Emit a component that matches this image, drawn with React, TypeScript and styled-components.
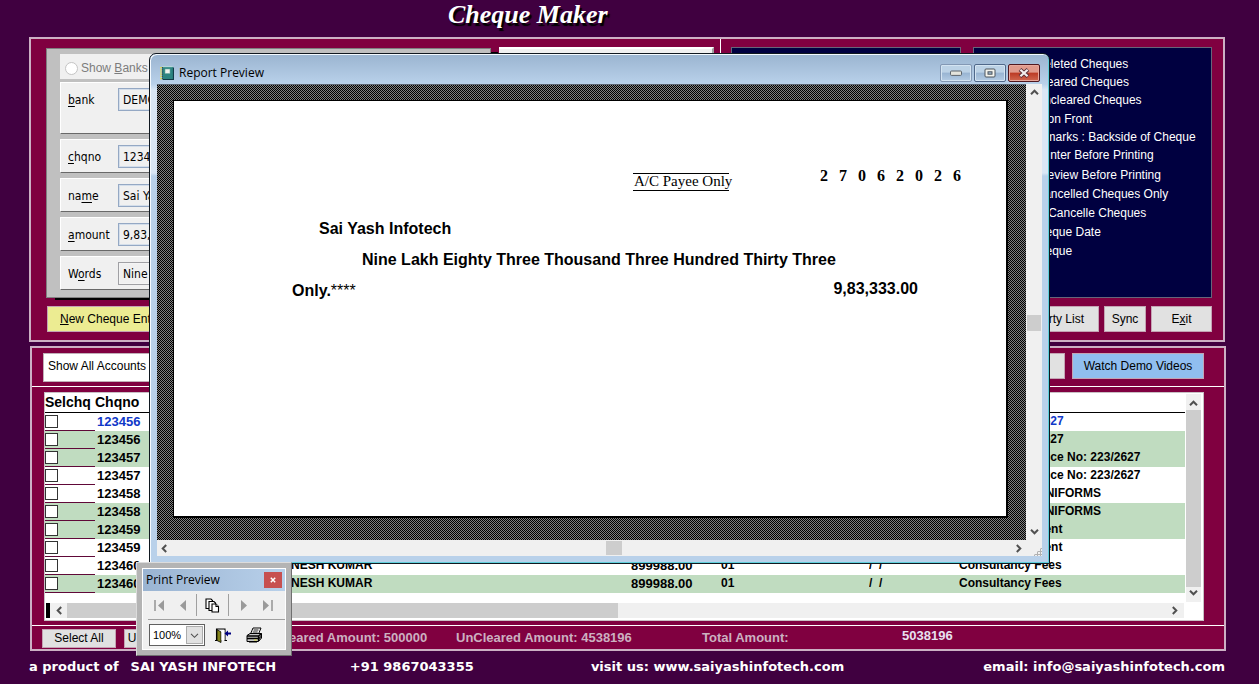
import React from "react";
import styled, { createGlobalStyle, css } from "styled-components";

const GlobalStyle = createGlobalStyle`
  *, *::before, *::after { box-sizing: border-box; }
  body {
    margin: 0;
    background: #400040;
    font-family: "Liberation Sans", Arial, sans-serif;
    font-size: 12px;
    color: #000;
  }
  button, input, select { font: inherit; color: inherit; margin: 0; }
`;

/* ---------- page ---------- */

const Page = styled.div`
  position: relative;
  min-width: 1060px;
  overflow: hidden;
  padding-left: 29px;
  padding-right: 34px;
`;

const AppTitle = styled.h1`
  margin: 0;
  height: 37px;
  padding-left: 419px;
  font: italic bold 26px/30px "Liberation Serif", serif;
  color: #fff;
  text-shadow: 2px 3px 1px #000;
`;

const Panel = styled.section`
  background: #800040;
  border: 2px solid #ccb0c4;
`;

const EntryPanel = styled(Panel)`
  display: flex;
  height: 305px;
  margin-bottom: 4px;
`;

const EntrySide = styled.div`
  flex: 667 1 0;
  padding: 9px 6px 8px 15px;
  display: grid;
  grid-template-columns: 445px 1fr;
  grid-template-rows: 251px 26px;
  gap: 7px 8px;
  align-items: start;
  border-right: 1px solid #fff;
`;

const OptionSide = styled.div`
  flex: 480 1 0;
  padding: 8px 11px 8px 10px;
  display: grid;
  grid-template-columns: 230px 1fr;
  grid-template-rows: 251px 26px;
  gap: 8px 12px;
`;

const FormBox = styled.form`
  height: 250px;
  padding: 5px 13px;
  display: flex;
  flex-direction: column;
  gap: 5px;
  background: #c0c0c0;
  border: 1px solid #808080;
  box-shadow: 8px 3px 0 -1px #000;
`;

const FormRow = styled.div<{ $tall?: boolean }>`
  display: flex;
  align-items: flex-start;
  height: ${(p) => (p.$tall ? 52 : 34)}px;
  padding: 5px 8px 4px 7px;
  background: #f0f0f0;
  border-style: solid;
  border-width: 1px 0 1px 1px;
  border-color: #fff #fff #696969 #fff;
  font-family: "DejaVu Sans Condensed", "DejaVu Sans", sans-serif;
  font-size: 12px;

  label { width: 50px; line-height: 24px; }
  u { text-underline-offset: 2px; }
`;

const BankModeRow = styled.div`
  display: flex;
  align-items: center;
  flex: none;
  gap: 3px;
  height: 25px;
  margin-bottom: -2px;
  padding: 3px 0 0 5px;
  background: #f0f0f0;
  color: #7c7c7c;

  input {
    appearance: none;
    width: 13px;
    height: 13px;
    border: 1px solid #c4c4c4;
    border-radius: 50%;
    background: #fff;
  }
`;

const Field = styled.input<{ $plain?: boolean }>`
  flex: 1;
  min-width: 0;
  height: 23px;
  padding: 0 4px;
  border: 1px solid ${(p) => (p.$plain ? "#a0a0a4" : "#94a8c4")};
  box-shadow: inset 0 0 0 1px ${(p) => (p.$plain ? "#f4f4f4" : "#d4deea")};
  background: #f0f0f0;
`;

const SidePane = styled.div`
  height: 250px;
  margin-top: -1px;
  background: #f0f0f0;
  border-top: 2px solid #fff;
  border-right: 2px solid #a0a0a0;
`;

const NavyPane = styled.div`
  background: #000040;
  border: 1px solid #66667a;
`;

const OptionPane = styled(NavyPane)`
  padding: 7px 10px;
  color: #fff;
`;

const OptionGroup = styled.div<{ $row: number }>`
  margin-bottom: 1px;

  label {
    display: flex;
    align-items: center;
    gap: 5px;
    height: ${(p) => p.$row}px;
    white-space: nowrap;
  }
  input { width: 13px; height: 13px; }
`;

const ButtonRow = styled.div`
  grid-column: 1 / -1;
  display: flex;
  justify-content: flex-end;
  gap: 5px;
`;

const tones = { grey: "#e1e1e1", yellow: "#ecec92", blue: "#90beef" };

const Button = styled.button<{ $tone?: keyof typeof tones; $width: number }>`
  width: ${(p) => p.$width}px;
  height: 26px;
  padding: 0;
  background: ${(p) => tones[p.$tone ?? "grey"]};
  border: 1px solid #c4a4b4;
  white-space: nowrap;
`;

const StartButton = styled(Button)`
  margin-left: 1px;
  padding-left: 12px;
  text-align: left;
`;

/* ---------- cheque list ---------- */

const ListPanel = styled(Panel)`
  margin: 0 -1px 0 1px;
  height: 305px;
  display: flex;
  flex-direction: column;
`;

const ListTools = styled.div`
  display: flex;
  gap: 7px;
  height: 39px;
  padding: 5px 20px 0 11px;
  border-bottom: 1px solid #fff;
`;

const AccountSelect = styled.select`
  appearance: none;
  width: 240px;
  height: 29px;
  margin-right: auto;
  padding: 0 4px 4px;
  background: #fff;
  border: 1px solid #c0b0b8;
`;

const Grid = styled.div`
  flex: none;
  height: 229px;
  margin: 5px 20px 4px 12px;
  border: 1px solid #c8c0c4;
  background: #fff;
  display: grid;
  grid-template-columns: 1fr 18px;
  grid-template-rows: 210px 17px;
  align-items: start;
`;

const ChequeTable = styled.table`
  width: 100%;
  table-layout: fixed;
  border-collapse: separate;
  border-spacing: 0;
  font-weight: bold;

  th {
    height: 20px;
    padding: 0;
    border-bottom: 1px solid #000;
    font-size: 14px;
    line-height: 17px;
    text-align: left;
  }
  td {
    height: 18px;
    padding: 0;
    line-height: 17px;
    vertical-align: top;
    white-space: nowrap;
    overflow: hidden;
  }
  td:first-child { border-bottom: 1px solid #600838; }
  td:nth-child(2) { padding-left: 2px; }
  td:nth-child(2), td:nth-child(4) { font-size: 13px; }
  td:nth-child(6) { white-space: pre; }
`;

const ChequeRow = styled.tr<{ $shaded: boolean; $current: boolean }>`
  background: ${(p) => (p.$shaded ? "#c0dcc0" : "#fff")};
  ${(p) => p.$current && css`color: #1038c8;`}
`;

const Tick = styled.input`
  appearance: none;
  display: block;
  width: 13px;
  height: 13px;
  margin-top: 2px;
  background: #fff;
  border: 1px solid #333;
`;

const VBar = styled.div`
  height: 100%;
  display: flex;
  flex-direction: column;
  align-items: center;
  justify-content: space-between;
  background: #f0f0f0;
`;

const HBar = styled(VBar)`
  flex-direction: row;
`;

const GridVBar = styled(VBar)`
  height: 208px;
  margin: 1px 2px 0 1px;
  padding: 5px 0;
`;

const GridHBar = styled(HBar)`
  height: 15px;
  margin: 0 1px;
  padding-right: 5px;
`;

const Marker = styled.span`
  width: 4px;
  height: 15px;
  margin-right: 5px;
  background: #000;
`;

const Thumb = styled.span<{ $w: number; $h: number }>`
  flex: none;
  width: ${(p) => p.$w}px;
  height: ${(p) => p.$h}px;
  background: #cdcdcd;
`;

const Spacer = styled.span<{ $grow?: number; $size?: number }>`
  flex: ${(p) => (p.$size ? 0 : p.$grow ?? 1)} 0 ${(p) => p.$size ?? 0}px;
`;

const Totals = styled.div`
  flex: 1;
  display: flex;
  align-items: flex-start;
  padding: 3px 10px 0;
  border-top: 1px solid #fff;
  color: #ccb0c0;
  font-size: 13px;
  font-weight: bold;
  line-height: 17px;
  white-space: nowrap;
`;

const SmallButton = styled(Button)`
  height: 19px;
  margin-right: 8px;
  color: #000;
  font-size: 12px;
  font-weight: normal;
`;

const Total = styled.span<{ $width: number; $bright?: boolean }>`
  width: ${(p) => p.$width}px;
  ${(p) => p.$bright && css`color: #e8e0f0; line-height: 14px;`}
`;

const Footer = styled.footer`
  display: grid;
  grid-template-columns: 318fr 239fr 389fr auto;
  height: 33px;
  color: #fff;
  font: bold 13px/31px "DejaVu Sans", Verdana, sans-serif;
  white-space: nowrap;

  a { color: inherit; text-decoration: none; }
`;

const Maker = styled.span`
  display: flex;
  gap: 12px;
`;

/* ---------- report preview window ---------- */

const ReportWindow = styled.section`
  position: absolute;
  left: 149px;
  top: 53px;
  width: 901px;
  height: 511px;
  padding: 0 7px 7px;
  display: flex;
  flex-direction: column;
  border: 1px solid #101820;
  border-radius: 7px 7px 0 0;
  background: linear-gradient(#9ab4d0, #b9d1ea 30px, #dae7f5 36px, #dae7f5 119px, #b9d1ea 122px);
  box-shadow: inset 1px 1px 0 #f4faff, inset -1px -1px 0 #5fd0dc;
`;

const TitleBar = styled.header`
  display: flex;
  align-items: center;
  height: 30px;
  flex: none;
  padding: 7px 2px 0 3px;
  gap: 5px;
  font: 12px/20px "Open Sans", "Noto Sans", sans-serif;

  h2 { flex: 1; margin: 0; font: inherit; }
`;

const CaptionButtons = styled.div`
  display: flex;
  gap: 2px;
`;

const CaptionButton = styled.button<{ $close?: boolean; $faint?: boolean }>`
  width: 32px;
  height: 18px;
  padding: 0;
  display: grid;
  place-items: center;
  border: 1px solid ${(p) => (p.$close ? "#501820" : p.$faint ? "#8398b4" : "#50688a")};
  border-radius: 2px;
  box-shadow: inset 0 0 0 1px ${(p) => (p.$close ? "#e8a89c" : "#d4e4f2")};
  background: ${(p) =>
    p.$close
      ? "linear-gradient(#e09a8c 0 45%, #bc3a24 50%, #d06850)"
      : "linear-gradient(#bcd2e6 0 45%, #98b4d2 50%, #b4cce4)"};
`;

const Client = styled.div`
  flex: 1;
  display: grid;
  grid-template-columns: 1fr 16px;
  grid-template-rows: 1fr 16px;
  background: #f0f0f0;
  min-height: 0;
`;

const Desk = styled.div`
  padding: 15px 18px 22px 16px;
  display: flex;
  border-top: 1px solid #5c6470;
  background: repeating-conic-gradient(#808080 0 25%, #000 0 50%) 0 0 / 2px 2px;
`;

const Cheque = styled.article`
  flex: 1;
  display: flex;
  flex-direction: column;
  padding: 72px 45px 0 118px;
  border: solid #000;
  border-width: 1px 2px 2px 1px;
  background: #fff;
  font-size: 16px;
  font-weight: bold;
  white-space: nowrap;
`;

const ChequeTop = styled.div`
  display: flex;
  justify-content: flex-end;
  align-items: flex-start;
  gap: 91px;
  margin-bottom: 28px;
  font-family: "Liberation Serif", serif;
`;

const Crossing = styled.span`
  width: 96px;
  height: 18px;
  padding-left: 1px;
  border: solid #000;
  border-width: 1px 0;
  font-size: 15px;
  font-weight: normal;
  line-height: 15px;
`;

const DateDigits = styled.span`
  display: flex;
  justify-content: space-between;
  width: 141px;
  line-height: 5px;
`;

const ChequeLine = styled.div<{ $indent?: number }>`
  display: flex;
  justify-content: space-between;
  padding: 0 43px 0 ${(p) => p.$indent ?? 0}px;
  margin-bottom: 12px;
  line-height: 19px;
`;

const Figure = styled.span`
  line-height: 15px;
`;

const Stars = styled.span`
  font-weight: normal;
`;

const ReportVBar = styled(VBar)`
  padding: 4px 0;
`;

const ReportHBar = styled(HBar)`
  padding: 0 3px;
`;

const Grip = styled.span`
  justify-self: end;
  align-self: end;
  width: 9px;
  height: 9px;
  background: radial-gradient(#b0b0b0 50%, transparent 60%) 0 0 / 3px 3px;
  clip-path: polygon(100% 0, 100% 100%, 0 100%);
`;

/* ---------- print preview palette ---------- */

const Palette = styled.section`
  position: absolute;
  left: 136px;
  top: 562px;
  width: 156px;
  height: 94px;
  padding: 5px;
  background: #b4b4b4;
  border: 1px solid #dcdcdc;
  border-right-color: #707070;
  border-bottom-color: #707070;
`;

const PaletteBody = styled.div`
  height: 100%;
  display: flex;
  flex-direction: column;
  background: #f0f0f0;
  border: 1px solid #fff;
`;

const PaletteTitle = styled.header`
  display: flex;
  align-items: center;
  justify-content: space-between;
  height: 22px;
  padding: 0 3px;
  background: linear-gradient(90deg, #9ab4d2, #b8d0ea);
  font: 12px/20px "Open Sans", "Noto Sans", sans-serif;

  h2 { margin: 0; font: inherit; }
  button {
    width: 18px;
    height: 16px;
    padding: 0;
    display: grid;
    place-items: center;
    border: 0;
    background: #c75050;
  }
`;

const ToolRow = styled.div`
  display: flex;
  align-items: center;
  height: 29px;
  margin: 0 0 0 5px;
  border-bottom: 1px solid #a0a0a0;
`;

const Tool = styled.button<{ $width: number }>`
  width: ${(p) => p.$width}px;
  height: 22px;
  padding: 0;
  display: grid;
  place-items: center;
  border: 0;
  background: none;
`;

const ToolRule = styled.span`
  width: 1px;
  height: 22px;
  background: #a0a0a0;
`;

const ZoomRow = styled.div`
  display: flex;
  align-items: center;
  padding: 4px 0 0 6px;
`;

const ZoomBox = styled.div`
  position: relative;
  display: flex;
  width: 56px;
  height: 22px;
  border: 1px solid #606060;
  background: #fff;

  select {
    appearance: none;
    width: 100%;
    border: 0;
    padding: 0 0 0 3px;
    background: none;
    outline: 0;
    font-size: 11px;
  }
`;

const ZoomArrow = styled.span`
  position: absolute;
  right: 1px;
  top: 1px;
  bottom: 1px;
  width: 17px;
  display: grid;
  place-items: center;
  background: #e1e1e1;
  border: 1px solid #acacac;
  pointer-events: none;
`;

/* ---------- icons ---------- */

const turns = { up: 0, right: 90, down: 180, left: 270 };

const ChevronSvg = styled.svg`
  flex: none;
`;

const Chevron = ({ to, thin }: { to: keyof typeof turns; thin?: boolean }) => (
  <ChevronSvg width="9" height="9" viewBox="0 0 9 9" aria-hidden="true">
    <path
      d="M1 6.2 4.5 2.7 8 6.2"
      transform={`rotate(${turns[to]} 4.5 4.5)`}
      fill="none"
      stroke="#505050"
      strokeWidth={thin ? 1.1 : 2}
    />
  </ChevronSvg>
);

const BookIcon = () => (
  <svg width="14" height="14" viewBox="0 0 14 14" aria-hidden="true">
    <rect x="2" y="1" width="11" height="12.5" fill="#2c8480" />
    <path d="M3 13.5h10.5V1.5" fill="none" stroke="#123c48" strokeWidth="1.2" />
    <path d="M2 .7h10.5" stroke="#b8dcd8" />
    <rect x="5" y="3" width="5" height="4.5" fill="#eef4ee" stroke="#6ca8a0" strokeWidth=".6" />
    <path d="M1 1v13" stroke="#e6e23c" strokeWidth="1.6" strokeDasharray="1.2 1" />
    <path d="M2.4 1v13" stroke="#345" strokeWidth="1" strokeDasharray="1.2 1" />
  </svg>
);

const MinimiseIcon = () => (
  <svg width="12" height="7" viewBox="0 0 12 7" aria-hidden="true">
    <rect x=".5" y="2" width="11" height="4.4" rx="1" fill="#e4e4dc" stroke="#5c646c" />
  </svg>
);

const RestoreIcon = () => (
  <svg width="12" height="10" viewBox="0 0 12 10" aria-hidden="true">
    <rect x="1" y="1" width="10" height="8" rx="1" fill="#f4f4ee" stroke="#4c545c" />
    <rect x="4" y="3.8" width="4" height="2.4" fill="#a0b8d0" stroke="#4c545c" />
  </svg>
);

const CloseIcon = () => (
  <svg width="12" height="10" viewBox="0 0 12 10" aria-hidden="true">
    <path d="M2 1.5 10 8.5M10 1.5 2 8.5" stroke="#5c3038" strokeWidth="4" />
    <path d="M2.4 1.8 9.6 8.2M9.6 1.8 2.4 8.2" stroke="#f4f0ee" strokeWidth="2.2" />
  </svg>
);

const SmallCloseIcon = () => (
  <svg width="6" height="6" viewBox="0 0 6 6" aria-hidden="true">
    <path d="M.8.8 5.2 5.2M5.2.8.8 5.2" stroke="#fff" strokeWidth="1.5" />
  </svg>
);

const SeekIcon = ({ back, end }: { back?: boolean; end?: boolean }) => (
  <svg width="12" height="13" viewBox="0 0 12 13" aria-hidden="true">
    <g transform={back ? "matrix(-1 0 0 1 12 0)" : undefined}>
      <path d={end ? "M1 1 7 6.5 1 12z" : "M3 1 9 6.5 3 12z"} fill="#9a9a9a" />
      {end && <path d="M10 1v11" stroke="#9a9a9a" strokeWidth="1.6" />}
    </g>
  </svg>
);

const PagesIcon = () => (
  <svg width="15" height="15" viewBox="0 0 15 15" fill="#fff" stroke="#000" strokeWidth="1.1" aria-hidden="true">
    <path d="M1 1h5l1.500 1.500v8H1z" />
    <path d="M4 3.500h5L10.500 5v7.500H4z" />
    <path d="M7 6h4l2.500 2.500V14H7z" />
    <path d="M11 6v2.500h2.500" />
  </svg>
);

const DoorIcon = () => (
  <svg width="16" height="15" viewBox="0 0 16 15" aria-hidden="true">
    <path d="M0 12.500h2.500M1.500 13V1h8.500v12M9.500 12.500h2.500" fill="none" stroke="#000" strokeWidth="1.100" />
    <path d="M2 1.500 6 4v10.500L2 12.500z" fill="#84841c" stroke="#000" strokeWidth=".8" />
    <path d="M6.500 2h3v10h-3z" fill="#fff" />
    <path d="M9.500 5.500 13 2.500v6z" fill="#000080" />
    <path d="M12 5.500h4" stroke="#000080" strokeWidth="2" />
  </svg>
);

const PrinterIcon = () => (
  <svg width="17" height="16" viewBox="0 0 17 16" stroke="#000" aria-hidden="true">
    <path d="M4.500 7 7 1h8l-2.500 6z" fill="#fff" />
    <path d="M7.500 3h5M6.700 5h5" strokeWidth=".9" />
    <path d="M1 8.500 4 6.500h11.500V11l-3 3.500H1z" fill="#c8c8c8" />
    <path d="M1 9h11.500v5M12.500 9l3-2.500M1 11.500h11.500" fill="none" strokeWidth="1.300" />
    <path d="M3 14.800h8" strokeWidth="1.400" />
    <path d="M13.500 9.500v3M14.700 8.300v3" strokeWidth=".8" />
    <path d="M8 13h3" stroke="#d8d83c" />
  </svg>
);

/* ---------- data ---------- */

const optionGroups = [
  { row: 18, items: ["Show Deleted Cheques", "Show Cleared Cheques", "Show Uncleared Cheques"] },
  { row: 18, items: ["Remark on Front", "Print Remarks : Backside of Cheque", "Show Printer Before Printing"] },
  {
    row: 19,
    items: [
      "Show Preview Before Printing",
      "Show Cancelled Cheques Only",
      "Exclude Cancelle Cheques",
      "Print Cheque Date",
      "Print Cheque",
    ],
  },
];

const cheques = [
  { no: "123456", remark: "Invoice No: 5/2627" },
  { no: "123456", remark: "Invoice No: 5/2627" },
  { no: "123457", remark: "As per our Invoice No: 223/2627" },
  { no: "123457", remark: "As per our Invoice No: 223/2627" },
  { no: "123458", remark: "EMPLOYEES UNIFORMS" },
  { no: "123458", remark: "EMPLOYEES UNIFORMS" },
  { no: "123459", remark: "Advance Payment" },
  { no: "123459", remark: "Advance Payment" },
  { no: "123460", name: "DINESH KUMAR", amount: "899988.00", code: "01", date: "/  /", remark: "Consultancy Fees" },
  { no: "123460", name: "DINESH KUMAR", amount: "899988.00", code: "01", date: "/  /", remark: "Consultancy Fees" },
];

const shadedRows = [1, 2, 5, 6, 9];

/* ---------- sections ---------- */

const EntryForm = () => (
  <FormBox>
    <BankModeRow>
      <input type="radio" id="show-banks" disabled />
      <label htmlFor="show-banks">Show <u>B</u>anks</label>
    </BankModeRow>
    <FormRow $tall>
      <label htmlFor="bank"><u>b</u>ank</label>
      <Field id="bank" defaultValue="DEMO" />
    </FormRow>
    <FormRow>
      <label htmlFor="chqno"><u>c</u>hqno</label>
      <Field id="chqno" defaultValue="123461" />
    </FormRow>
    <FormRow>
      <label htmlFor="name">na<u>m</u>e</label>
      <Field id="name" defaultValue="Sai Yash Infotech" />
    </FormRow>
    <FormRow>
      <label htmlFor="amount"><u>a</u>mount</label>
      <Field id="amount" defaultValue="9,83,333.00" />
    </FormRow>
    <FormRow>
      <label htmlFor="words">W<u>o</u>rds</label>
      <Field id="words" $plain defaultValue="Nine Lakh Eighty Three Thousand" />
    </FormRow>
  </FormBox>
);

const ChequeList = () => (
  <Grid>
    <ChequeTable>
      <colgroup>
        <col width="50" />
        <col width="184" />
        <col width="352" />
        <col width="90" />
        <col width="148" />
        <col width="90" />
        <col />
      </colgroup>
      <thead>
        <tr>
          <th>Selchq</th>
          <th>Chqno</th>
          <th colSpan={5} />
        </tr>
      </thead>
      <tbody>
        {cheques.map((c, i) => (
          <ChequeRow key={i} $shaded={shadedRows.includes(i)} $current={i === 0}>
            <td><Tick type="checkbox" aria-label={`Select cheque ${c.no}`} /></td>
            <td>{c.no}</td>
            <td>{c.name}</td>
            <td>{c.amount}</td>
            <td>{c.code}</td>
            <td>{c.date}</td>
            <td>{c.remark}</td>
          </ChequeRow>
        ))}
      </tbody>
    </ChequeTable>
    <GridVBar>
      <Chevron to="up" />
      <Thumb $w={15} $h={177} />
      <Chevron to="down" />
    </GridVBar>
    <GridHBar>
      <Marker />
      <Chevron to="left" />
      <Spacer $size={3} />
      <Thumb $w={551} $h={15} />
      <Spacer />
      <Chevron to="right" />
    </GridHBar>
  </Grid>
);

const ReportPreview = () => (
  <ReportWindow>
    <TitleBar>
      <BookIcon />
      <h2>Report Preview</h2>
      <CaptionButtons>
        <CaptionButton $faint aria-label="Minimise"><MinimiseIcon /></CaptionButton>
        <CaptionButton aria-label="Restore"><RestoreIcon /></CaptionButton>
        <CaptionButton $close aria-label="Close report"><CloseIcon /></CaptionButton>
      </CaptionButtons>
    </TitleBar>
    <Client>
      <Desk>
        <Cheque>
          <ChequeTop>
            <Crossing>A/C Payee Only</Crossing>
            <DateDigits>
              {"27062026".split("").map((d, i) => <span key={i}>{d}</span>)}
            </DateDigits>
          </ChequeTop>
          <ChequeLine $indent={27}>Sai Yash Infotech</ChequeLine>
          <ChequeLine $indent={70}>Nine Lakh Eighty Three Thousand Three Hundred Thirty Three</ChequeLine>
          <ChequeLine>
            <span>Only.<Stars>****</Stars></span>
            <Figure>9,83,333.00</Figure>
          </ChequeLine>
        </Cheque>
      </Desk>
      <ReportVBar>
        <Chevron to="up" />
        <Spacer $grow={218} />
        <Thumb $w={14} $h={16} />
        <Spacer $grow={196} />
        <Chevron to="down" />
      </ReportVBar>
      <ReportHBar>
        <Chevron to="left" />
        <Spacer $grow={437} />
        <Thumb $w={16} $h={14} />
        <Spacer $grow={392} />
        <Chevron to="right" />
      </ReportHBar>
      <Grip />
    </Client>
  </ReportWindow>
);

const PrintPreview = () => (
  <Palette>
    <PaletteBody>
      <PaletteTitle>
        <h2>Print Preview</h2>
        <button aria-label="Close print preview"><SmallCloseIcon /></button>
      </PaletteTitle>
      <ToolRow>
        <Tool $width={22} aria-label="First page"><SeekIcon back end /></Tool>
        <Tool $width={26} aria-label="Previous page"><SeekIcon back /></Tool>
        <ToolRule />
        <Tool $width={31} aria-label="Go to page"><PagesIcon /></Tool>
        <ToolRule />
        <Tool $width={30} aria-label="Next page"><SeekIcon /></Tool>
        <Tool $width={18} aria-label="Last page"><SeekIcon end /></Tool>
      </ToolRow>
      <ZoomRow>
        <ZoomBox>
          <select aria-label="Zoom" defaultValue="100%">
            <option>100%</option>
          </select>
          <ZoomArrow><Chevron to="down" thin /></ZoomArrow>
        </ZoomBox>
        <Tool $width={36} aria-label="Close preview"><DoorIcon /></Tool>
        <Tool $width={26} aria-label="Print"><PrinterIcon /></Tool>
      </ZoomRow>
    </PaletteBody>
  </Palette>
);

export default function App() {
  return (
    <Page>
      <GlobalStyle />
      <AppTitle>Cheque Maker</AppTitle>
      <EntryPanel>
        <EntrySide>
          <EntryForm />
          <SidePane />
          <StartButton $tone="yellow" $width={120}><u>N</u>ew Cheque Entry</StartButton>
        </EntrySide>
        <OptionSide>
          <NavyPane />
          <OptionPane>
            {optionGroups.map((g, i) => (
              <OptionGroup key={i} $row={g.row}>
                {g.items.map((item) => (
                  <label key={item}><input type="checkbox" />{item}</label>
                ))}
              </OptionGroup>
            ))}
          </OptionPane>
          <ButtonRow>
            <Button $width={80}>Party List</Button>
            <Button $width={42}>Sync</Button>
            <Button $width={61}>E<u>x</u>it</Button>
          </ButtonRow>
        </OptionSide>
      </EntryPanel>
      <ListPanel>
        <ListTools>
          <AccountSelect aria-label="Account">
            <option>Show All Accounts</option>
          </AccountSelect>
          <Button $width={90} aria-label="Refresh" />
          <Button $tone="blue" $width={132}>Watch Demo Videos</Button>
        </ListTools>
        <ChequeList />
        <Totals>
          <SmallButton $width={74}>Select All</SmallButton>
          <SmallButton $width={54}>Unselect</SmallButton>
          <Spacer $size={90} />
          <Total $width={180}>Cleared Amount: 500000</Total>
          <Total $width={246}>UnCleared Amount: 4538196</Total>
          <Total $width={200}>Total Amount:</Total>
          <Total $width={60} $bright>5038196</Total>
        </Totals>
      </ListPanel>
      <Footer>
        <Maker><span>a product of</span><span>SAI YASH INFOTECH</span></Maker>
        <span>+91 9867043355</span>
        <span>visit us: <a href="#site">www.saiyashinfotech.com</a></span>
        <span>email: <a href="#mail">info@saiyashinfotech.com</a></span>
      </Footer>
      <ReportPreview />
      <PrintPreview />
    </Page>
  );
}
